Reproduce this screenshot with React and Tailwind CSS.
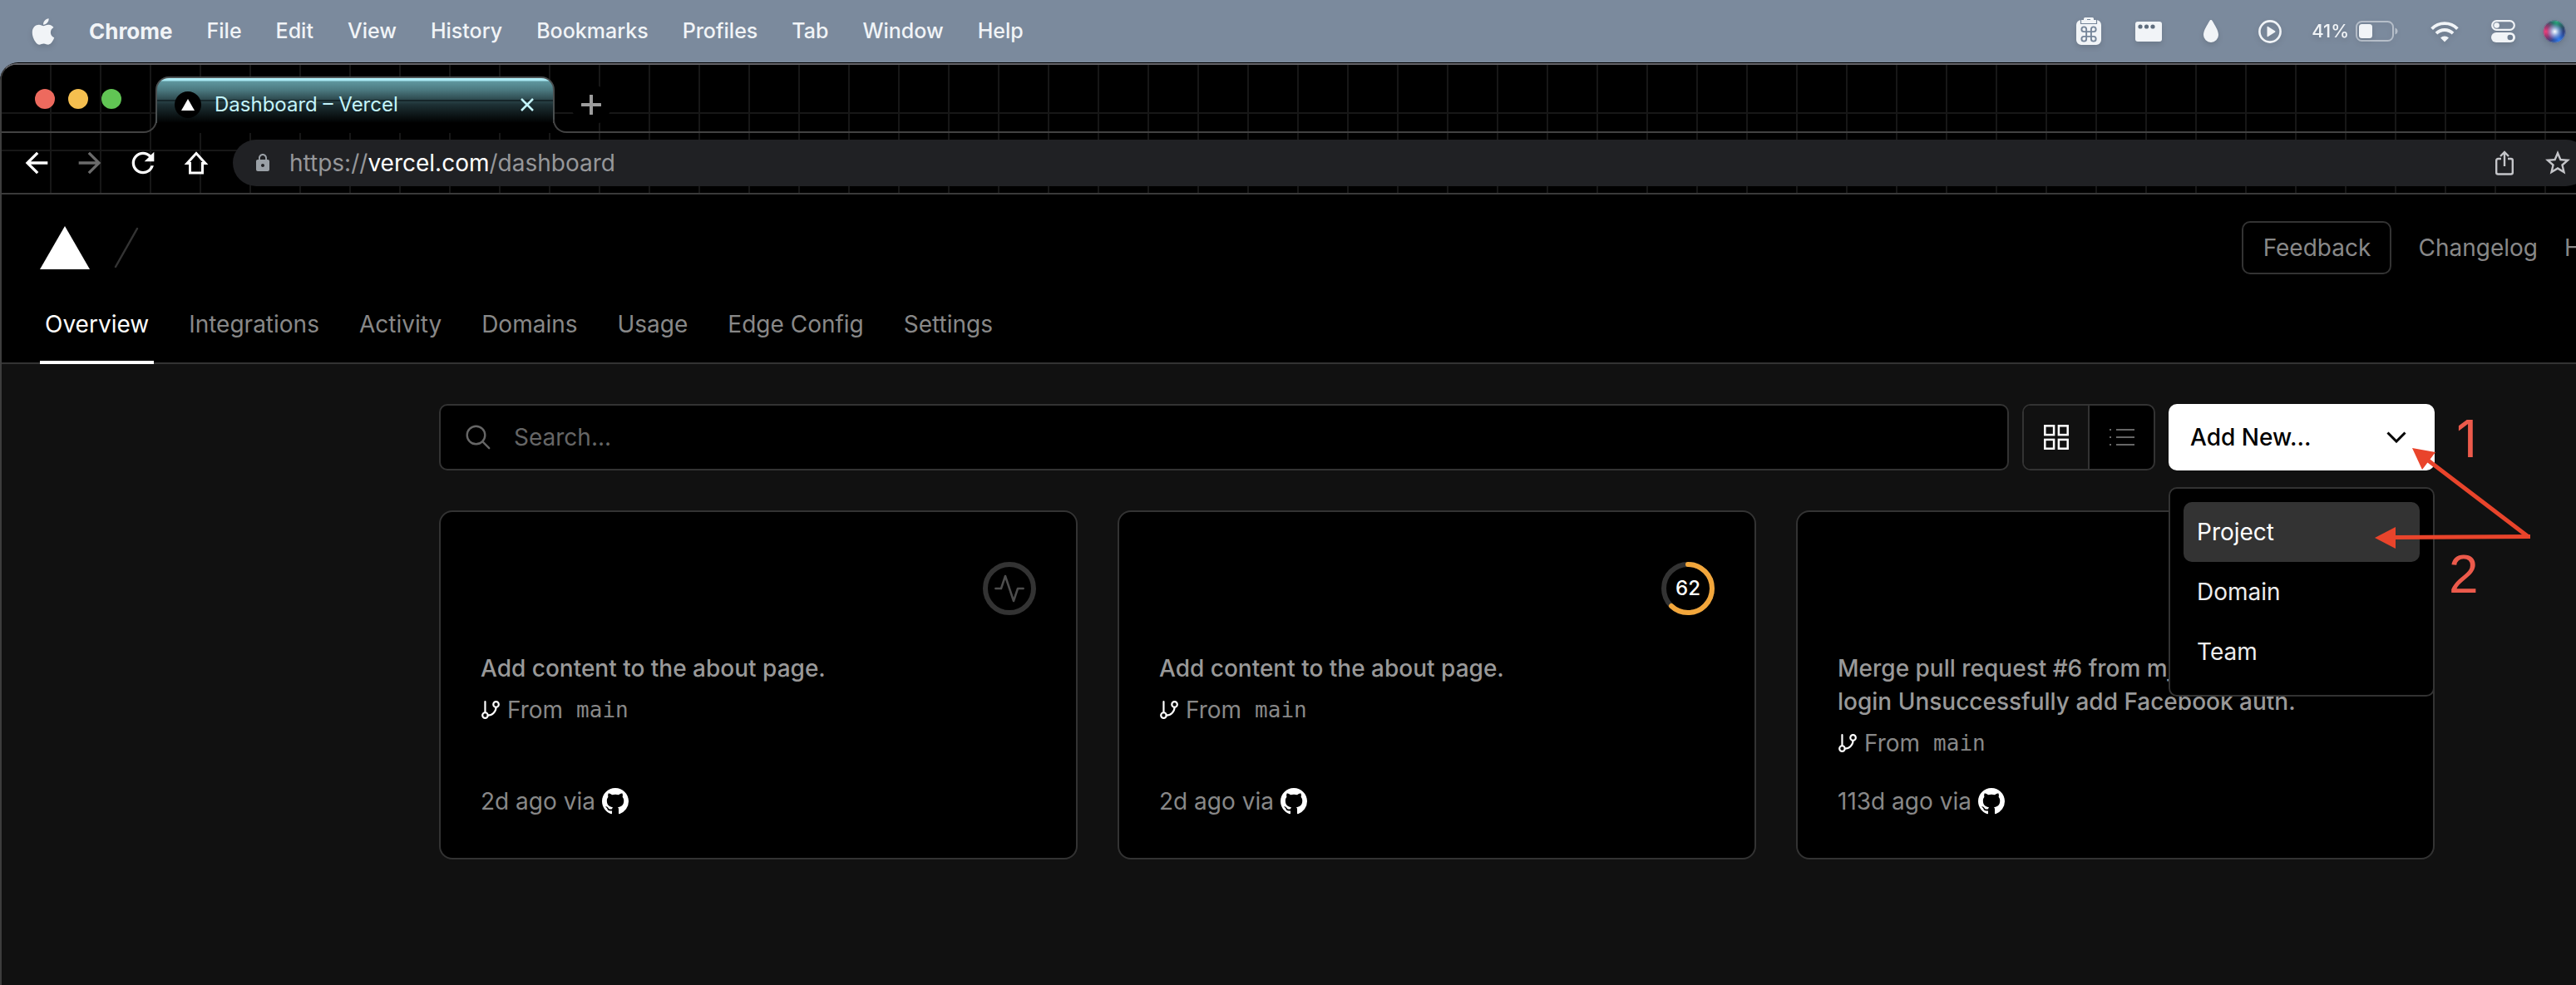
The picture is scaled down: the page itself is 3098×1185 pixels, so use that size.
import React from "react";
import { FaApple } from "react-icons/fa";
import { MdArrowBack, MdArrowForward, MdRefresh, MdLock, MdStarBorder } from "react-icons/md";

const menus = ["File", "Edit", "View", "History", "Bookmarks", "Profiles", "Tab", "Window", "Help"];
const navLinks = ["Integrations", "Activity", "Domains", "Usage", "Edge Config", "Settings"];
const projects = [
  { message: ["Add content to the about page."], age: "2d", status: "idle" },
  { message: ["Add content to the about page."], age: "2d", status: "score" },
  {
    message: ["Merge pull request #6 from mj", "login Unsuccessfully add Facebook auth."],
    age: "113d",
    status: "none",
  },
];

function ClipboardIcon() {
  return (
    <svg width="30" height="33" viewBox="0 0 30 33" aria-hidden="true">
      <path
        fill="currentColor"
        d="M6 3h3V1.500a1.500 1.500 0 0 1 1.500-1.500h9a1.500 1.500 0 0 1 1.500 1.500V3h3a6 6 0 0 1 6 6v18a6 6 0 0 1-6 6H6a6 6 0 0 1-6-6V9a6 6 0 0 1 6-6z"
      />
      <path d="M5.500 3v4.500h19V3M13 2.500h4" fill="none" stroke="#76869a" strokeWidth="1.200" />
      <path
        transform="translate(3.500 8.500) scale(.96)"
        d="M15 6v12a3 3 0 1 0 3-3H6a3 3 0 1 0 3 3V6a3 3 0 1 0-3 3h12a3 3 0 1 0-3-3"
        fill="none"
        stroke="#76869a"
        strokeWidth="2"
      />
    </svg>
  );
}

function WindowIcon() {
  return (
    <svg width="32" height="24" viewBox="0 0 32 24" aria-hidden="true">
      <rect width="32" height="24" rx="3" fill="currentColor" />
      <circle cx="6" cy="6" r="2.600" fill="#5f6d7e" />
      <circle cx="13.500" cy="6" r="2.600" fill="#5f6d7e" />
      <circle cx="21" cy="6" r="2.600" fill="#5f6d7e" />
    </svg>
  );
}

function DropIcon() {
  return (
    <svg width="18" height="27" viewBox="0 0 18 27" aria-hidden="true">
      <path
        fill="currentColor"
        d="M9 0c.8 0 1.300.5 1.700 1.200C13.500 6 18 12.500 18 18a9 9 0 0 1-18 0C0 12.500 4.500 6 7.300 1.200 7.700.5 8.200 0 9 0z"
      />
    </svg>
  );
}

function PlayIcon() {
  return (
    <svg width="28" height="28" viewBox="0 0 28 28" aria-hidden="true">
      <circle cx="14" cy="14" r="12.600" fill="none" stroke="currentColor" strokeWidth="2.600" />
      <path fill="currentColor" d="M10.500 8.500v11a.8.8 0 0 0 1.200.6l8.300-5.400a.8.8 0 0 0 0-1.400l-8.300-5.400a.8.8 0 0 0-1.200.6z" />
    </svg>
  );
}

function BatteryIcon() {
  return (
    <svg width="51" height="25" viewBox="0 0 51 25" aria-hidden="true">
      <rect x="1" y="1" width="44" height="23" rx="6.500" fill="none" stroke="currentColor" strokeOpacity=".5" strokeWidth="2" />
      <rect x="4" y="4" width="16" height="17" rx="3.500" fill="currentColor" />
      <path d="M47.500 8.500c2 .7 3 2.200 3 4s-1 3.300-3 4z" fill="currentColor" fillOpacity=".5" />
    </svg>
  );
}

function WifiIcon() {
  return (
    <svg width="34" height="26" viewBox="0 0 34 26" aria-hidden="true">
      <g fill="none" stroke="currentColor" strokeWidth="3.800">
        <path d="M1.600 9.600a21.500 21.500 0 0 1 30.800 0" />
        <path d="M7 15.200a14 14 0 0 1 20 0" />
      </g>
      <path d="M17 25.500l-5-5a7 7 0 0 1 10 0z" fill="currentColor" />
    </svg>
  );
}

function ControlCenterIcon() {
  return (
    <svg width="29" height="27" viewBox="0 0 29 27" aria-hidden="true">
      <rect x="1.200" y="1.200" width="26.600" height="10.600" rx="5.300" fill="none" stroke="currentColor" strokeWidth="2.200" />
      <circle cx="6.600" cy="6.500" r="3.300" fill="currentColor" />
      <rect y="15" width="29" height="12" rx="6" fill="currentColor" />
      <circle cx="22.800" cy="21" r="3.300" fill="#6f7e91" />
    </svg>
  );
}

function SiriIcon() {
  return (
    <svg width="28" height="28" viewBox="0 0 28 28" aria-hidden="true">
      <defs>
        <radialGradient id="siri-core" cx=".52" cy=".5" r=".36">
          <stop offset="0" stopColor="#fff" />
          <stop offset=".3" stopColor="#cfe6ff" stopOpacity=".8" />
          <stop offset="1" stopColor="#8fb5ff" stopOpacity="0" />
        </radialGradient>
        <radialGradient id="siri-red" cx=".12" cy=".5" r=".5">
          <stop offset="0" stopColor="#f0407a" />
          <stop offset="1" stopColor="#d03a7a" stopOpacity="0" />
        </radialGradient>
        <radialGradient id="siri-green" cx=".6" cy=".08" r=".55">
          <stop offset="0" stopColor="#2aa77a" />
          <stop offset="1" stopColor="#1c7f70" stopOpacity="0" />
        </radialGradient>
        <radialGradient id="siri-blue" cx=".7" cy=".85" r=".6">
          <stop offset="0" stopColor="#2f7df0" />
          <stop offset="1" stopColor="#2457b8" stopOpacity="0" />
        </radialGradient>
      </defs>
      <circle cx="14" cy="14" r="13.500" fill="#34305c" />
      <circle cx="14" cy="14" r="13.500" fill="url(#siri-green)" />
      <circle cx="14" cy="14" r="13.500" fill="url(#siri-blue)" />
      <circle cx="14" cy="14" r="13.500" fill="url(#siri-red)" />
      <circle cx="14" cy="14" r="13.500" fill="url(#siri-core)" />
      <circle cx="14" cy="14" r="13.200" fill="none" stroke="#8fa3b8" strokeOpacity=".5" />
    </svg>
  );
}

function MenuBar() {
  return (
    <header className="flex h-[75px] shrink-0 items-center justify-between bg-[#7b8a9d] pl-[38px] pr-3 text-[25px] text-[#f1f4f7]">
      <nav aria-label="Menu bar" className="flex items-center gap-[41px] font-medium [text-shadow:0_4px_5px_rgba(0,0,0,0.25)]">
        <button aria-label="Apple menu" className="drop-shadow-md">
          <FaApple size={36} className="h-9 w-7" />
        </button>
        <button className="text-[26px] font-bold">Chrome</button>
        {menus.map((m) => (
          <button key={m}>{m}</button>
        ))}
      </nav>
      <div className="flex items-center drop-shadow-md">
        <span className="mr-[41px]"><ClipboardIcon /></span>
        <span className="mr-[50px]"><WindowIcon /></span>
        <span className="mr-12"><DropIcon /></span>
        <span className="mr-9"><PlayIcon /></span>
        <span className="mr-2 text-[22px] font-medium">41%</span>
        <span className="mr-[39px]"><BatteryIcon /></span>
        <span className="mr-[39px]"><WifiIcon /></span>
        <span className="mr-[33px]"><ControlCenterIcon /></span>
        <SiriIcon />
      </div>
    </header>
  );
}

function TabStrip() {
  return (
    <div className="flex h-[82px] items-end bg-[linear-gradient(#171717,#171717)] bg-[length:100%_2px] bg-[position:0_57px] bg-no-repeat">
      <div className="-mr-0.5 flex h-[82px] w-[187px] shrink-0 flex-col">
        <div className="flex flex-1 items-center gap-4 pl-10 pt-4">
          <button aria-label="Close window" className="size-6 rounded-full bg-[#ed6a5e]" />
          <button aria-label="Minimize window" className="size-6 rounded-full bg-[#f5bf4f]" />
          <button aria-label="Zoom window" className="size-6 rounded-full bg-[#61c554]" />
        </div>
        <div className="h-4 rounded-br-2xl border-b-2 border-r-2 border-[#424242]" />
      </div>
      <div className="h-[68px] w-[480px] shrink-0 bg-black bg-clip-content px-0.5 pt-1">
        <div className="-mx-0.5 -mt-1 flex h-14 items-start rounded-t-2xl border-x-2 border-t-2 border-[#4a4f50] bg-[linear-gradient(#16262a,#16262a),linear-gradient(#b4f0fa_0px,#a5e6f0_3px,#5f979f_4px,#4c7a81_14px,#1d3034_32px,#000_54px)] bg-[length:100%_2px,100%_100%] bg-[position:0_26px,0_0] bg-no-repeat pl-[21px] pr-[15px] pt-4 text-[#c3f4fb]">
          <span className="flex size-8 items-center justify-center rounded-full bg-black">
            <svg width="16" height="14" viewBox="0 0 16 14" aria-hidden="true">
              <path d="M8 0l8 14H0z" fill="#fff" />
            </svg>
          </span>
          <span className="ml-4 flex-1 text-[24px] leading-8">Dashboard – Vercel</span>
          <button aria-label="Close tab" className="flex size-8 items-center justify-center">
            <svg width="18" height="18" viewBox="0 0 18 18" aria-hidden="true">
              <path d="M2 2l14 14M16 2L2 16" stroke="currentColor" strokeWidth="2.500" />
            </svg>
          </button>
        </div>
      </div>
      <div className="-ml-0.5 flex h-[82px] flex-1 flex-col">
        <div className="flex min-h-0 flex-1 items-start pl-[22px] pt-6">
          <button
            aria-label="New tab"
            className="flex size-12 shrink-0 items-center justify-center rounded-full bg-black text-[#9c9c9c]"
          >
            <svg width="24" height="24" viewBox="0 0 24 24" aria-hidden="true">
              <path d="M12 1v22M1 12h22" stroke="currentColor" strokeWidth="4" strokeLinecap="round" />
            </svg>
          </button>
        </div>
        <div className="h-4 shrink-0 rounded-bl-2xl border-b-2 border-l-2 border-[#424242]" />
      </div>
    </div>
  );
}

function Toolbar() {
  return (
    <div className="flex h-[74px] items-center gap-6 border-b-2 border-[#3a3a3a] bg-[linear-gradient(#171717,#171717)] bg-[length:100%_2px] bg-[position:0_20px] bg-no-repeat pl-[22px] text-white">
      <button aria-label="Back"><MdArrowBack size={40} /></button>
      <button aria-label="Forward" className="text-[#6b6b6b]"><MdArrowForward size={40} /></button>
      <button aria-label="Reload"><MdRefresh size={40} /></button>
      <button aria-label="Home">
        <svg width="40" height="40" viewBox="0 0 40 40" fill="none" stroke="currentColor" strokeWidth="3" aria-hidden="true">
          <path d="M20 8.500L9 20.500h3.500v11.500h15V20.500H31z" />
        </svg>
      </button>
      <div className="-mr-4 flex h-14 flex-1 items-center rounded-full bg-[#202124] pl-6 pr-5">
        <MdLock size={24} className="shrink-0 text-[#9aa0a6]" />
        <a href="#address" className="ml-5 flex-1 text-[28px] text-[#96979a]">
          https://<span className="text-white">vercel.com</span>/dashboard
        </a>
        <button aria-label="Share" className="mr-[35px] text-[#c4c5c9]">
          <svg width="22" height="30" viewBox="0 0 22 30" fill="none" stroke="currentColor" strokeWidth="2.400" aria-hidden="true">
            <path d="M7 10H3.200A2 2 0 0 0 1.200 12v14.500a2 2 0 0 0 2 2h15.600a2 2 0 0 0 2-2V12a2 2 0 0 0-2-2H15M11 19V2.500M6 7l5-5 5 5" />
          </svg>
        </button>
        <button aria-label="Bookmark this tab" className="text-[#c4c5c9]">
          <MdStarBorder size={36} />
        </button>
      </div>
    </div>
  );
}

function SiteHeader() {
  return (
    <div className="border-b-2 border-[#333] bg-black text-[28px] leading-10 text-[#888]">
      <div className="flex h-32 items-center justify-between pl-[46px]">
        <div className="flex items-center gap-[29px]">
          <a href="#home" aria-label="Vercel">
            <svg width="60" height="52" viewBox="0 0 60 52" aria-hidden="true">
              <path d="M30 0l30 52H0z" fill="#fff" />
            </svg>
          </a>
          <svg width="30" height="52" viewBox="0 0 30 52" aria-hidden="true">
            <path d="M28 3L2 49" stroke="#333" strokeWidth="2.500" strokeLinecap="round" />
          </svg>
        </div>
        <div className="flex items-center">
          <button className="mr-8 h-16 w-[180px] rounded-[10px] border-2 border-[#333]">Feedback</button>
          <a href="#changelog" className="mr-8">Changelog</a>
          <a href="#help" className="w-3.5 overflow-hidden">Help</a>
        </div>
      </div>
      <nav aria-label="Dashboard" className="flex h-[74px] gap-12 pl-[46px]">
        <a href="#overview" className="-mb-0.5 -mr-1.5 border-b-4 border-white px-1.5 pt-2 text-white">Overview</a>
        {navLinks.map((l) => (
          <a key={l} href={"#" + l.toLowerCase().replace(" ", "-")} className="pt-2">{l}</a>
        ))}
      </nav>
    </div>
  );
}

function Annotations() {
  return (
    <>
      <svg
        className="pointer-events-none absolute left-[242px] top-11 z-20"
        width="200"
        height="140"
        viewBox="0 0 200 140"
        fill="#e9442b"
        stroke="#e9442b"
        aria-hidden="true"
      >
        <path d="M51 9l28 5-16 21z" stroke="none" />
        <path d="M69 23l122 93" strokeWidth="5" fill="none" />
        <path d="M6 117l25-13v26z" stroke="none" />
        <path d="M30 116.500L193 115.500" strokeWidth="5" fill="none" />
      </svg>
      <span className="absolute left-[346px] top-2.5 z-20 text-[62px] leading-[64px] text-[#ec5a4b]">1</span>
      <span className="absolute left-[337px] top-[173px] z-20 font-['Liberation_Sans',sans-serif] text-[64px] leading-[64px] text-[#ec5a4b]">2</span>
    </>
  );
}

function Controls() {
  return (
    <div className="flex h-20 gap-4">
      <label className="flex flex-1 items-center gap-7 rounded-[10px] border-2 border-[#333] bg-black pl-[30px]">
        <svg width="30" height="30" viewBox="0 0 30 30" fill="none" stroke="#666" strokeWidth="2.400" strokeLinecap="round" aria-hidden="true">
          <circle cx="12.500" cy="12.500" r="10.800" />
          <path d="M20.200 20.200l8 8" />
        </svg>
        <input
          type="text"
          aria-label="Search"
          placeholder="Search..."
          className="h-full min-w-0 flex-1 bg-transparent text-[28px] outline-none placeholder:text-[#666]"
        />
      </label>
      <div className="flex w-40 overflow-hidden rounded-[10px] border-2 border-[#333] bg-black">
        <button aria-label="Grid view" className="flex flex-1 items-center justify-center border-r-2 border-[#333] bg-[#111] text-white">
          <svg width="30" height="30" viewBox="0 0 30 30" fill="none" stroke="currentColor" strokeWidth="2.500" aria-hidden="true">
            <rect x="1.300" y="1.300" width="10.800" height="10.800" />
            <rect x="17.900" y="1.300" width="10.800" height="10.800" />
            <rect x="1.300" y="17.900" width="10.800" height="10.800" />
            <rect x="17.900" y="17.900" width="10.800" height="10.800" />
          </svg>
        </button>
        <button aria-label="List view" className="flex flex-1 items-center justify-center text-[#666]">
          <svg width="30" height="30" viewBox="0 0 30 30" stroke="currentColor" strokeWidth="2.200" aria-hidden="true">
            <path d="M8 6h22M8 15h22M8 24h22M0 6h2M0 15h2M0 24h2" />
          </svg>
        </button>
      </div>
      <div className="relative w-80">
        <button
          aria-haspopup="menu"
          aria-expanded="true"
          className="flex h-20 w-full items-center justify-between rounded-[10px] bg-white pl-[26px] pr-[34px] text-[28px] font-medium text-black"
        >
          Add New...
          <svg width="24" height="14" viewBox="0 0 24 14" fill="none" stroke="currentColor" strokeWidth="3" aria-hidden="true">
            <path d="M1.500 1.500L12 12 22.500 1.500" />
          </svg>
        </button>
        <ul
          role="menu"
          className="absolute left-0 top-[100px] z-10 w-full rounded-[10px] border-2 border-[#333] bg-black p-4 text-[28px] leading-[72px] text-[#ededed]"
        >
          <li role="none">
            <button role="menuitem" className="w-full rounded-[10px] bg-[#333] px-4 text-left text-white">Project</button>
          </li>
          <li role="none">
            <button role="menuitem" className="w-full px-4 text-left">Domain</button>
          </li>
          <li role="none">
            <button role="menuitem" className="w-full px-4 text-left">Team</button>
          </li>
        </ul>
        <Annotations />
      </div>
    </div>
  );
}

function StatusRing({ status }) {
  if (status === "none") return null;
  const ring = 2 * Math.PI * 29;
  return (
    <span className="relative flex size-16 items-center justify-center">
      <svg className="absolute inset-0" width="64" height="64" viewBox="0 0 64 64" fill="none" strokeWidth="6" aria-hidden="true">
        <circle cx="32" cy="32" r="29" stroke="#333" />
        {status === "score" && (
          <circle
            cx="32"
            cy="32"
            r="29"
            stroke="#f2a63b"
            strokeLinecap="round"
            strokeDasharray={`${ring * 0.62} ${ring}`}
            transform="rotate(-90 32 32)"
          />
        )}
      </svg>
      {status === "score" ? (
        <span className="relative text-[24px] font-medium leading-8 text-white">62</span>
      ) : (
        <svg width="40" height="40" viewBox="0 0 24 24" fill="none" stroke="#4d4d4d" strokeWidth="1.500" strokeLinejoin="round" strokeLinecap="round" aria-hidden="true">
          <path d="M22 12h-4l-3 9L9 3l-3 9H2" />
        </svg>
      )}
    </span>
  );
}

function ProjectCard({ message, age, status }) {
  return (
    <article className="flex flex-col rounded-2xl border-2 border-[#333] bg-black p-12 text-[28px] leading-10 text-[#888]">
      <div className="flex h-[88px] items-center justify-end">
        <StatusRing status={status} />
      </div>
      <p className="mt-8 font-medium text-[#999]">
        {message.map((line) => (
          <span key={line} className="block">{line}</span>
        ))}
      </p>
      <div className="mb-[30px] mt-2.5 flex items-center">
        <svg width="24" height="24" viewBox="1 1 22 22" fill="none" stroke="#fff" strokeWidth="2" strokeLinecap="round" aria-hidden="true">
          <path d="M6 3v12M18 9a9 9 0 0 1-9 9" />
          <circle cx="18" cy="6" r="3" />
          <circle cx="6" cy="18" r="3" />
        </svg>
        <span className="ml-2">From</span>
        <code className="ml-4 font-['DejaVu_Sans_Mono',monospace] text-[26px]">main</code>
      </div>
      <div className="mt-auto flex items-center gap-2">
        <span>{age} ago via</span>
        <svg width="32" height="32" viewBox="0 0 16 16" fill="#fff" role="img" aria-label="GitHub">
          <path d="M8 0C3.580 0 0 3.580 0 8c0 3.540 2.290 6.530 5.470 7.590.4.070.55-.17.55-.38 0-.19-.01-.82-.01-1.490-2.010.37-2.530-.49-2.690-.94-.09-.23-.48-.94-.82-1.130-.28-.15-.68-.52-.01-.53.63-.01 1.080.58 1.230.82.72 1.210 1.870.87 2.330.66.07-.52.28-.87.51-1.070-1.780-.2-3.640-.89-3.640-3.950 0-.87.31-1.590.82-2.150-.08-.2-.36-1.020.08-2.120 0 0 .67-.21 2.200.82.64-.18 1.320-.27 2-.27.68 0 1.360.09 2 .27 1.530-1.040 2.200-.82 2.200-.82.44 1.100.16 1.920.08 2.120.51.56.82 1.270.82 2.150 0 3.070-1.870 3.750-3.650 3.950.29.25.54.73.54 1.480 0 1.070-.01 1.930-.01 2.200 0 .21.15.46.55.38A8.013 8.013 0 0 0 16 8c0-4.420-3.580-8-8-8z" />
        </svg>
      </div>
    </article>
  );
}

export default function App() {
  return (
    <div className="flex min-h-screen w-full flex-col overflow-hidden bg-[#7b8a9d] font-['Inter',sans-serif] antialiased">
      <MenuBar />
      <div className="flex flex-1 flex-col overflow-hidden rounded-tl-[22px] bg-black pt-px">
        <div className="flex flex-1 flex-col overflow-hidden rounded-tl-[20px] border-l-2 border-t-2 border-l-[#3d3d3d] border-t-[#66666b]">
          <div className="bg-black bg-[repeating-linear-gradient(90deg,transparent_0px,transparent_58px,#171717_58px,#171717_60px)]">
            <TabStrip />
            <Toolbar />
          </div>
          <SiteHeader />
          <main className="flex flex-1 flex-col gap-12 bg-[#111] pb-12 pl-[526px] pr-[170px] pt-12">
            <Controls />
            <section aria-label="Projects" className="grid grid-cols-3 gap-12">
              {projects.map((p, i) => (
                <ProjectCard key={i} {...p} />
              ))}
            </section>
          </main>
        </div>
      </div>
    </div>
  );
}
